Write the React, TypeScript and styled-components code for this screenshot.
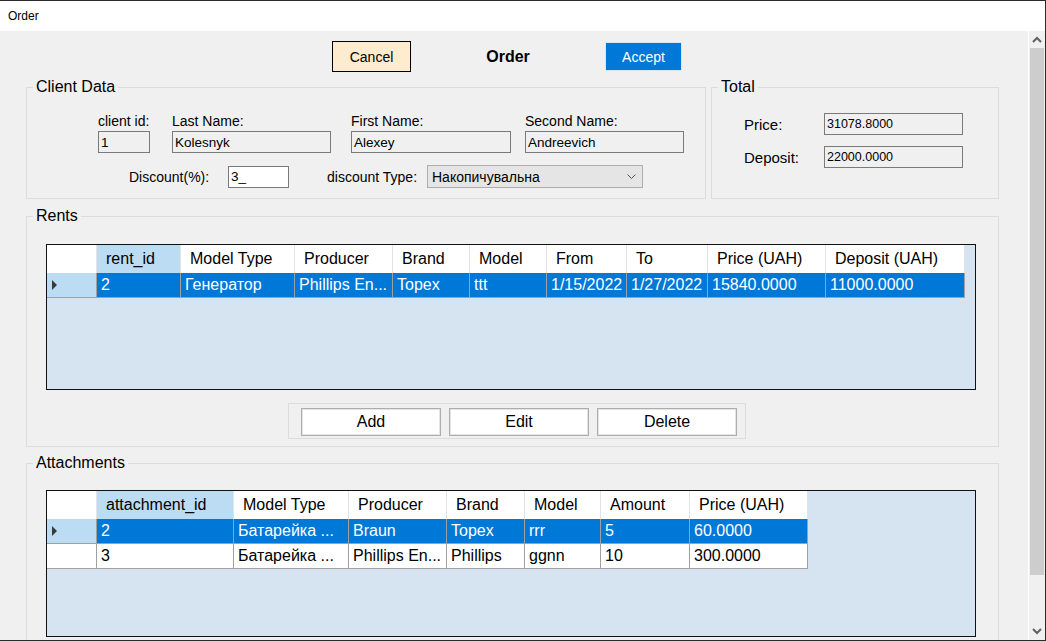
import React from 'react';
import styled, { createGlobalStyle } from 'styled-components';

const Global = createGlobalStyle`
  html, body { margin: 0; padding: 0; background: #fff; }
  body { font-family: "Liberation Sans", Arial, sans-serif; color: #000; }
  * { box-sizing: border-box; }
`;

const Window = styled.div`
  width: 1046px;
  height: 641px;
  display: flex;
  flex-direction: column;
  border-top: 1px solid #2b2b2b;
  border-right: 1px solid #2b2b2b;
  border-bottom: 1px solid #2b2b2b;
  overflow: hidden;
  background: #fff;
`;

const TitleBar = styled.div`
  height: 30px;
  flex: none;
  display: flex;
  align-items: center;
  padding-left: 8px;
  font-size: 12px;
  background: #fff;
`;

const Body = styled.div`
  flex: 1;
  display: flex;
  min-height: 0;
`;

const Content = styled.div`
  flex: 1;
  background: #f0f0f0;
  overflow: hidden;
  padding-top: 10px;
  display: flex;
  flex-direction: column;
`;

const Toolbar = styled.div`
  display: flex;
  align-items: center;
  height: 31px;
  padding-left: 332px;
  flex: none;
`;

const CancelButton = styled.button`
  width: 79px;
  height: 31px;
  border: 1px solid #000;
  background: #ffebcd;
  font-family: inherit;
  font-size: 14px;
  color: #000;
  padding: 0;
`;

const Heading = styled.div`
  width: 194px;
  text-align: center;
  font-weight: bold;
  font-size: 16px;
`;

const AcceptButton = styled.button`
  width: 77px;
  height: 29px;
  border: 1px solid #d6e8f8;
  background: #0078d7;
  color: #fff;
  font-family: inherit;
  font-size: 14px;
  padding: 0;
`;

const TopRow = styled.div`
  display: flex;
  gap: 5px;
  margin-top: 15px;
  padding-left: 26px;
  flex: none;
`;

const GroupBox = styled.div<{ $w: number; $h: number; $mt?: number }>`
  position: relative;
  flex: none;
  width: ${p => p.$w}px;
  height: ${p => p.$h}px;
  margin-top: ${p => p.$mt ?? 0}px;
  border: 1px solid #dcdcdc;
`;

const SectionBox = styled(GroupBox)<{ $pt: number }>`
  margin-left: 26px;
  padding: ${p => p.$pt}px 0 0 19px;
`;

const Legend = styled.div`
  position: absolute;
  top: -10px;
  left: 6px;
  padding: 0 3px;
  background: #f0f0f0;
  font-size: 16px;
  line-height: 18px;
  white-space: nowrap;
`;

const ClientInner = styled.div`
  padding-top: 25px;
`;

const FieldsRow = styled.div`
  display: flex;
  padding-left: 71px;
`;

const Field = styled.div<{ $w: number; $ml?: number }>`
  display: flex;
  flex-direction: column;
  width: ${p => p.$w}px;
  margin-left: ${p => p.$ml ?? 0}px;
`;

const FieldLabel = styled.div`
  font-size: 14px;
  line-height: 16px;
  margin-bottom: 2px;
  white-space: nowrap;
`;

const TextBox = styled.div<{ $w?: number; $white?: boolean; $fs?: number }>`
  width: ${p => (p.$w ? `${p.$w}px` : '100%')};
  height: 22px;
  border: 1px solid #7a7a7a;
  background: ${p => (p.$white ? '#fff' : '#f0f0f0')};
  font-size: ${p => p.$fs ?? 13.5}px;
  padding: 0 2px;
  display: flex;
  align-items: center;
  white-space: nowrap;
`;

const DiscountRow = styled.div`
  display: flex;
  align-items: center;
  margin-top: 12px;
  padding-left: 102px;
`;

const InlineLabel = styled.div<{ $w: number; $ml?: number }>`
  width: ${p => p.$w}px;
  margin-left: ${p => p.$ml ?? 0}px;
  font-size: 14px;
  white-space: nowrap;
`;

const Combo = styled.div`
  width: 216px;
  height: 23px;
  border: 1px solid #adadad;
  background: #e5e5e5;
  display: flex;
  align-items: center;
  justify-content: space-between;
  padding: 0 6px 0 4px;
  font-size: 14px;
`;

const TotalGrid = styled.div`
  display: grid;
  grid-template-columns: 80px 139px;
  row-gap: 11px;
  align-items: center;
  padding: 25px 0 0 32px;
`;

const TotalLabel = styled.div`
  font-size: 15px;
`;

const Grid = styled.div<{ $h: number }>`
  width: 930px;
  height: ${p => p.$h}px;
  border: 1px solid #111;
  background: #d6e4f2;
  overflow: hidden;
`;

const GridRow = styled.div<{ $header?: boolean }>`
  display: flex;
  width: max-content;
  height: ${p => (p.$header ? 28 : 25)}px;
  background: ${p => (p.$header ? '#fff' : 'transparent')};
  border-bottom: ${p => (p.$header ? 'none' : '1px solid #a0a0a0')};
`;

const RowHeader = styled.div<{ $sel?: boolean; $header?: boolean }>`
  width: 50px;
  flex: none;
  display: flex;
  align-items: center;
  padding-left: 5px;
  background: ${p => (p.$sel ? '#bcdcf4' : '#fff')};
  border-right: 1px solid ${p => (p.$header ? '#e3e3e3' : '#a0a0a0')};
`;

const Arrow = styled.span`
  width: 0;
  height: 0;
  border-left: 5px solid #3a3a3a;
  border-top: 5px solid transparent;
  border-bottom: 5px solid transparent;
`;

const HeaderCell = styled.div<{ $w: number; $sel?: boolean }>`
  width: ${p => p.$w}px;
  flex: none;
  display: flex;
  align-items: center;
  padding-left: 9px;
  font-size: 16px;
  white-space: nowrap;
  overflow: hidden;
  background: ${p => (p.$sel ? '#bcdcf4' : '#fff')};
  border-right: 1px solid #e3e3e3;
`;

const Cell = styled.div<{ $w: number; $sel?: boolean }>`
  width: ${p => p.$w}px;
  flex: none;
  display: flex;
  align-items: center;
  padding-left: 4px;
  font-size: 16px;
  white-space: nowrap;
  overflow: hidden;
  background: ${p => (p.$sel ? '#0078d7' : '#fff')};
  color: ${p => (p.$sel ? '#fff' : '#000')};
  border-right: 1px solid #a0a0a0;
`;

const ButtonPanel = styled.div`
  display: flex;
  gap: 8px;
  width: 458px;
  height: 36px;
  margin: 13px 0 0 242px;
  padding: 4px 0 0 12px;
  border: 1px solid #dcdcdc;
`;

const PanelButton = styled.button`
  width: 140px;
  height: 28px;
  border: 1px solid #adadad;
  box-shadow: inset 0 0 0 1px #e4e4e4;
  background: #fff;
  font-family: inherit;
  font-size: 16px;
  color: #000;
  padding: 0;
`;

const ScrollBar = styled.div`
  width: 17px;
  flex: none;
  border-left: 1px solid #fff;
  background: #f0f0f0;
  display: flex;
  flex-direction: column;
`;

const ScrollArrow = styled.div`
  height: 17px;
  flex: none;
  display: flex;
  align-items: center;
  justify-content: center;
`;

const Thumb = styled.div`
  height: 527px;
  margin: 0 1px;
  background: #cdcdcd;
  flex: none;
`;

const Spacer = styled.div`
  flex: 1;
`;

type Col = { title: string; w: number };

const rentCols: Col[] = [
  { title: 'rent_id', w: 84 },
  { title: 'Model Type', w: 114 },
  { title: 'Producer', w: 98 },
  { title: 'Brand', w: 77 },
  { title: 'Model', w: 77 },
  { title: 'From', w: 80 },
  { title: 'To', w: 81 },
  { title: 'Price (UAH)', w: 118 },
  { title: 'Deposit (UAH)', w: 139 },
];

const rentRows = [
  { sel: true, cells: ['2', 'Генератор', 'Phillips En...', 'Topex', 'ttt', '1/15/2022', '1/27/2022', '15840.0000', '11000.0000'] },
];

const attCols: Col[] = [
  { title: 'attachment_id', w: 137 },
  { title: 'Model Type', w: 115 },
  { title: 'Producer', w: 98 },
  { title: 'Brand', w: 78 },
  { title: 'Model', w: 76 },
  { title: 'Amount', w: 89 },
  { title: 'Price (UAH)', w: 118 },
];

const attRows = [
  { sel: true, cells: ['2', 'Батарейка ...', 'Braun', 'Topex', 'rrr', '5', '60.0000'] },
  { sel: false, cells: ['3', 'Батарейка ...', 'Phillips En...', 'Phillips', 'ggnn', '10', '300.0000'] },
];

function DataGrid({ cols, rows, h }: { cols: Col[]; rows: { sel: boolean; cells: string[] }[]; h: number }) {
  return (
    <Grid $h={h}>
      <GridRow $header>
        <RowHeader $header />
        {cols.map((c, i) => (
          <HeaderCell key={c.title} $w={c.w} $sel={i === 0}>
            {c.title}
          </HeaderCell>
        ))}
      </GridRow>
      {rows.map((r, ri) => (
        <GridRow key={ri}>
          <RowHeader $sel={r.sel}>{r.sel && <Arrow />}</RowHeader>
          {r.cells.map((v, i) => (
            <Cell key={i} $w={cols[i].w} $sel={r.sel}>
              {v}
            </Cell>
          ))}
        </GridRow>
      ))}
    </Grid>
  );
}

const Chevron = ({ up }: { up?: boolean }) => (
  <svg width="10" height="7" viewBox="0 0 10 7">
    <polyline
      points={up ? '1,6 5,2 9,6' : '1,1 5,5 9,1'}
      fill="none"
      stroke="#606060"
      strokeWidth="2"
    />
  </svg>
);

export default function App() {
  return (
    <>
      <Global />
      <Window>
        <TitleBar>Order</TitleBar>
        <Body>
          <Content>
            <Toolbar>
              <CancelButton>Cancel</CancelButton>
              <Heading>Order</Heading>
              <AcceptButton>Accept</AcceptButton>
            </Toolbar>

            <TopRow>
              <GroupBox $w={680} $h={112}>
                <Legend>Client Data</Legend>
                <ClientInner>
                  <FieldsRow>
                    <Field $w={52}>
                      <FieldLabel>client id:</FieldLabel>
                      <TextBox>1</TextBox>
                    </Field>
                    <Field $w={159} $ml={22}>
                      <FieldLabel>Last Name:</FieldLabel>
                      <TextBox>Kolesnyk</TextBox>
                    </Field>
                    <Field $w={160} $ml={20}>
                      <FieldLabel>First Name:</FieldLabel>
                      <TextBox>Alexey</TextBox>
                    </Field>
                    <Field $w={159} $ml={14}>
                      <FieldLabel>Second Name:</FieldLabel>
                      <TextBox>Andreevich</TextBox>
                    </Field>
                  </FieldsRow>
                  <DiscountRow>
                    <InlineLabel $w={99}>Discount(%):</InlineLabel>
                    <TextBox $w={61} $white>3_</TextBox>
                    <InlineLabel $w={100} $ml={38}>discount Type:</InlineLabel>
                    <Combo>
                      <span>Накопичувальна</span>
                      <svg width="9" height="6" viewBox="0 0 9 6">
                        <polyline points="0.5,0.5 4.5,4.5 8.5,0.5" fill="none" stroke="#555" strokeWidth="1" />
                      </svg>
                    </Combo>
                  </DiscountRow>
                </ClientInner>
              </GroupBox>

              <GroupBox $w={288} $h={112}>
                <Legend>Total</Legend>
                <TotalGrid>
                  <TotalLabel>Price:</TotalLabel>
                  <TextBox $fs={12.5}>31078.8000</TextBox>
                  <TotalLabel>Deposit:</TotalLabel>
                  <TextBox $fs={12.5}>22000.0000</TextBox>
                </TotalGrid>
              </GroupBox>
            </TopRow>

            <SectionBox $w={973} $h={231} $mt={17} $pt={27}>
              <Legend>Rents</Legend>
              <DataGrid cols={rentCols} rows={rentRows} h={146} />
              <ButtonPanel>
                <PanelButton>Add</PanelButton>
                <PanelButton>Edit</PanelButton>
                <PanelButton>Delete</PanelButton>
              </ButtonPanel>
            </SectionBox>

            <SectionBox $w={973} $h={220} $mt={16} $pt={26}>
              <Legend>Attachments</Legend>
              <DataGrid cols={attCols} rows={attRows} h={147} />
            </SectionBox>
          </Content>
          <ScrollBar>
            <ScrollArrow>
              <Chevron up />
            </ScrollArrow>
            <Thumb />
            <Spacer />
            <ScrollArrow>
              <Chevron />
            </ScrollArrow>
          </ScrollBar>
        </Body>
      </Window>
    </>
  );
}
